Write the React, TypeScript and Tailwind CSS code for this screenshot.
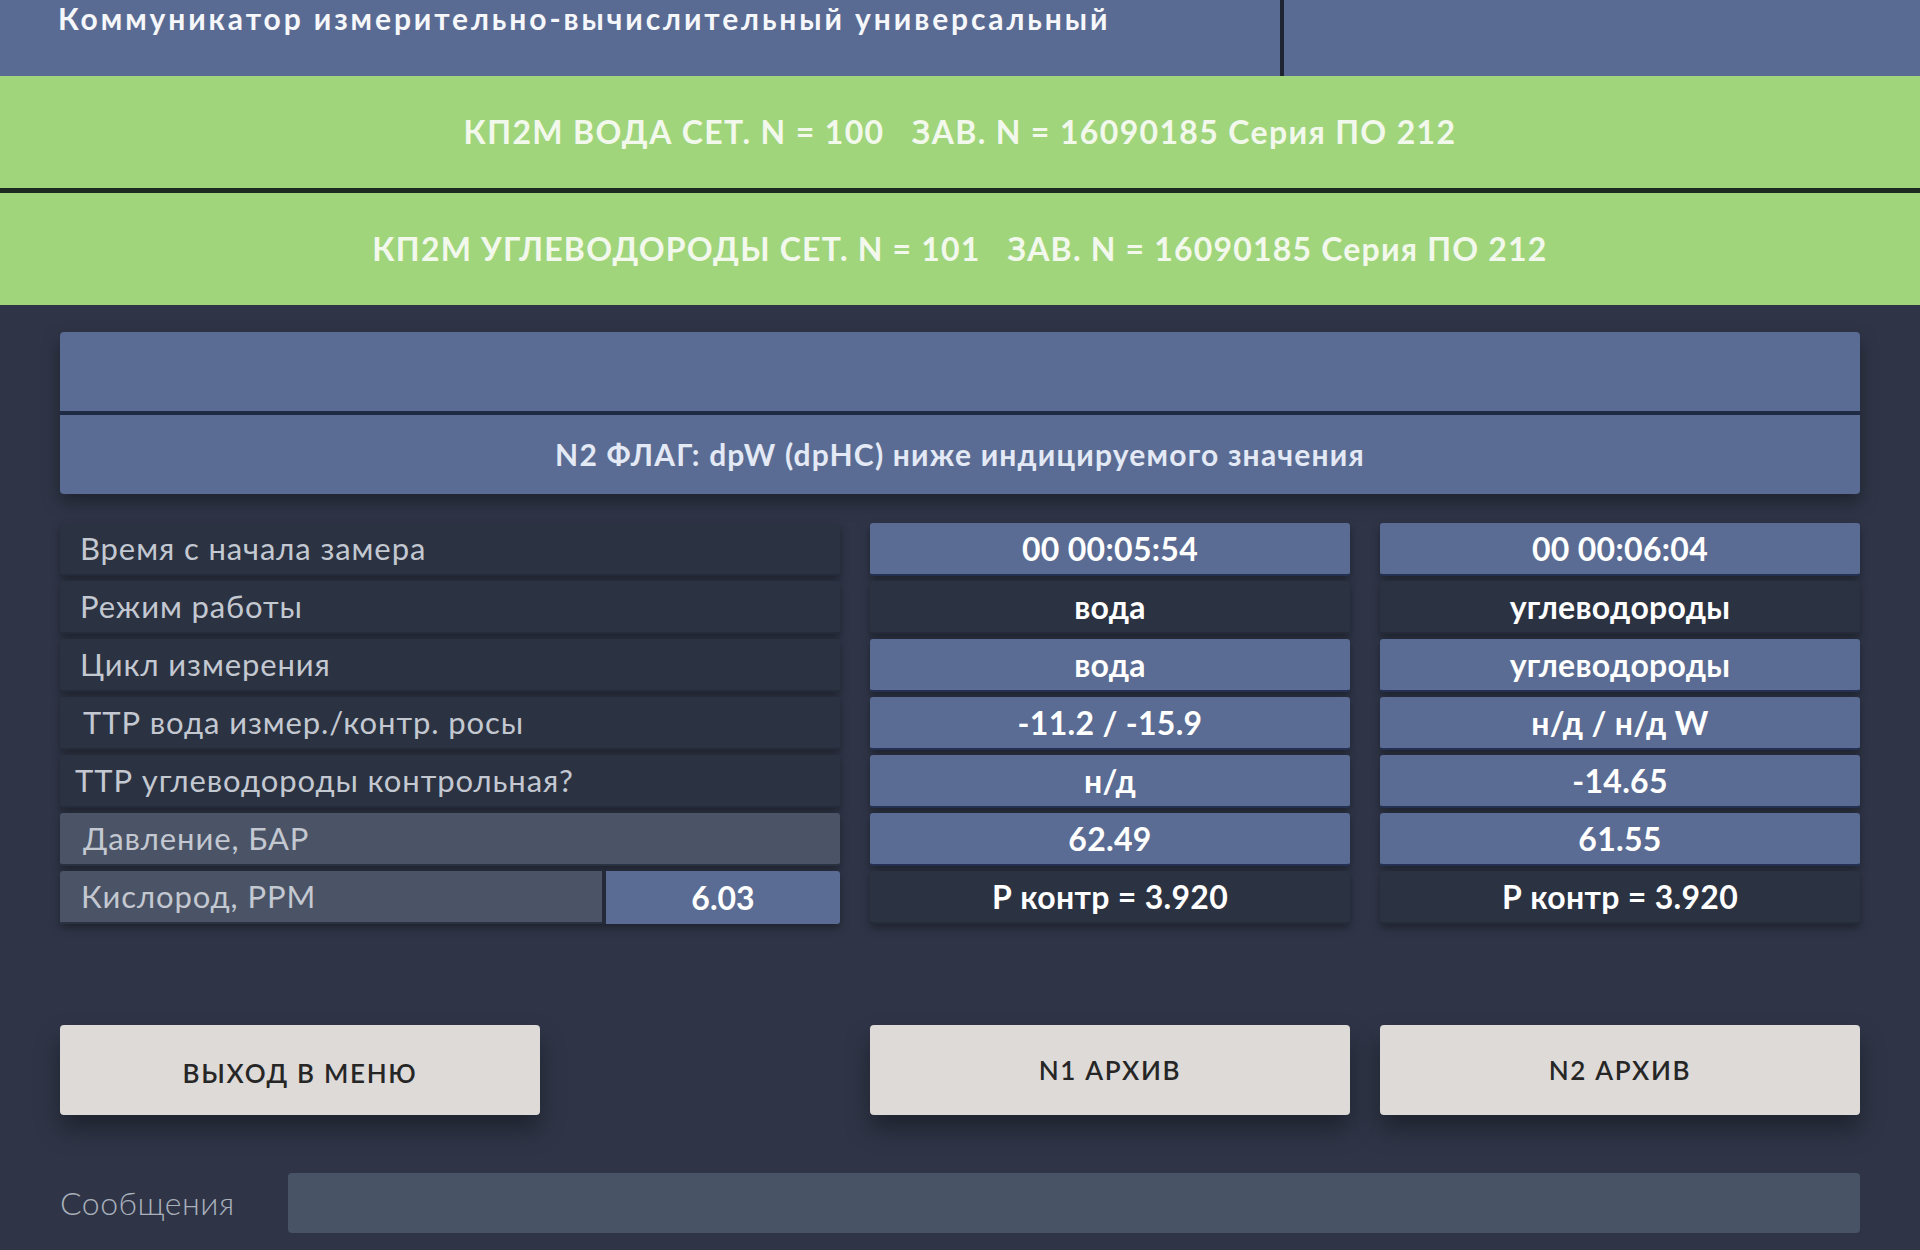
import React from 'react';

type Tone = 'dark' | 'light' | 'blue';

interface Row {
  label: string;
  pad: string;
  labelTone: Tone;
  extra?: string;
  a: string;
  b: string;
  valTone: Tone;
}

const rows: Row[] = [
  { label: 'Время с начала замера', pad: 'pl-[20px]', labelTone: 'dark', a: '00 00:05:54', b: '00 00:06:04', valTone: 'blue' },
  { label: 'Режим работы', pad: 'pl-[20px]', labelTone: 'dark', a: 'вода', b: 'углеводороды', valTone: 'dark' },
  { label: 'Цикл измерения', pad: 'pl-[20px]', labelTone: 'dark', a: 'вода', b: 'углеводороды', valTone: 'blue' },
  { label: 'ТТР вода измер./контр. росы', pad: 'pl-[23px]', labelTone: 'dark', a: '-11.2 / -15.9', b: 'н/д / н/д W', valTone: 'blue' },
  { label: 'ТТР углеводороды контрольная?', pad: 'pl-[15px]', labelTone: 'dark', a: 'н/д', b: '-14.65', valTone: 'blue' },
  { label: 'Давление, БАР', pad: 'pl-[23px]', labelTone: 'light', a: '62.49', b: '61.55', valTone: 'blue' },
  { label: 'Кислород, PPM', pad: 'pl-[21px]', labelTone: 'light', extra: '6.03', a: 'Р контр = 3.920', b: 'Р контр = 3.920', valTone: 'dark' },
];

const toneBg = (t: Tone) => {
  switch (t) {
    case 'blue': return 'bg-[#5a6c93] border-b-2 border-[#243152]';
    case 'light': return 'bg-[#4a5466] border-b-2 border-[#2a3140]';
    default: return 'bg-[#2b3242] border-b-2 border-[#252b38]';
  }
};

const labelText = 'text-[31px] tracking-[0.9px] text-[#c3c8d1]';

const ValueCell: React.FC<{ text: string; tone: Tone }> = ({ text, tone }) => (
  <div className={`h-[53px] rounded-[3px] flex items-center justify-center text-[32px] font-bold tracking-[0.3px] text-white shadow-[0_4px_8px_rgba(0,0,0,0.35)] ${toneBg(tone)}`}>
    {text}
  </div>
);

const Button: React.FC<{ text: string; extra?: string }> = ({ text, extra = '' }) => (
  <button className={`h-[90px] w-[480px] rounded-[4px] bg-[#dddad8] text-[#262626] text-[26px] font-semibold tracking-[1.7px] shadow-[0_14px_24px_rgba(0,0,0,0.35)] ${extra}`}>
    {text}
  </button>
);

export default function App() {
  return (
    <div className="w-[1920px] h-[1250px] bg-[#2f3547] font-['Lato',sans-serif] overflow-hidden flex flex-col">
      {/* header */}
      <div className="h-[76px] flex bg-[#596b93]">
        <div className="w-[1280px] pl-[58px]">
          <span className="text-[30px] leading-[36px] font-bold tracking-[2.9px] text-[#f5f7fa]">
            Коммуникатор измерительно-вычислительный универсальный
          </span>
        </div>
        <div className="w-[4px] bg-[#1f2433]" />
        <div className="flex-1" />
      </div>

      {/* device bands */}
      <div className="h-[112px] bg-[#a1d57c] flex items-center justify-center">
        <span className="whitespace-pre text-[32px] font-bold tracking-[1.35px] text-[#f2f9ec]">
          {'КП2М ВОДА СЕТ. N = 100   ЗАВ. N = 16090185 Серия ПО 212'}
        </span>
      </div>
      <div className="h-[5px] bg-[#1d2a20]" />
      <div className="h-[112px] bg-[#a1d57c] flex items-center justify-center">
        <span className="whitespace-pre text-[32px] font-bold tracking-[1.2px] text-[#f2f9ec]">
          {'КП2М УГЛЕВОДОРОДЫ СЕТ. N = 101   ЗАВ. N = 16090185 Серия ПО 212'}
        </span>
      </div>

      <div className="pl-[60px] pr-[60px] pt-[27px] flex flex-col">
        {/* status panel */}
        <div className="rounded-[4px] bg-[#1f2a44] shadow-[0_8px_18px_rgba(0,0,0,0.35)] flex flex-col gap-[4px] overflow-hidden">
          <div className="h-[79px] bg-[#5a6c93]" />
          <div className="h-[79px] bg-[#5a6c93] flex items-center justify-center text-[30px] font-bold tracking-[1.2px] text-[#e3e9f5]">
            N2 ФЛАГ: dpW (dpHC) ниже индицируемого значения
          </div>
        </div>

        {/* measurement table */}
        <div className="mt-[29px] grid grid-cols-[780px_480px_480px] gap-x-[30px] gap-y-[5px]">
          {rows.map((r, i) => (
            <React.Fragment key={i}>
              {r.extra ? (
                <div className="h-[53px] rounded-[3px] flex overflow-hidden shadow-[0_4px_8px_rgba(0,0,0,0.35)] bg-[#242a37]">
                  <div className={`flex-1 flex items-center ${r.pad} ${toneBg(r.labelTone)} ${labelText}`}>
                    {r.label}
                  </div>
                  <div className="w-[234px] ml-[4px] flex items-center justify-center bg-[#5a6c93] text-[32px] font-bold text-white">
                    {r.extra}
                  </div>
                </div>
              ) : (
                <div className={`h-[53px] rounded-[3px] flex items-center ${r.pad} ${toneBg(r.labelTone)} ${labelText} shadow-[0_4px_8px_rgba(0,0,0,0.35)]`}>
                  {r.label}
                </div>
              )}
              <ValueCell text={r.a} tone={r.valTone} />
              <ValueCell text={r.b} tone={r.valTone} />
            </React.Fragment>
          ))}
        </div>

        {/* buttons */}
        <div className="mt-[101px] grid grid-cols-[780px_480px_480px] gap-x-[30px]">
          <Button text="ВЫХОД В МЕНЮ" extra="pt-[7px]" />
          <Button text="N1 АРХИВ" />
          <Button text="N2 АРХИВ" />
        </div>

        {/* messages */}
        <div className="mt-[58px] flex items-center">
          <span className="w-[228px] text-[32px] font-light tracking-[0.5px] text-[#a9b0bb]">Сообщения</span>
          <div className="flex-1 h-[60px] rounded-[4px] bg-[#485366]" />
        </div>
      </div>
    </div>
  );
}
